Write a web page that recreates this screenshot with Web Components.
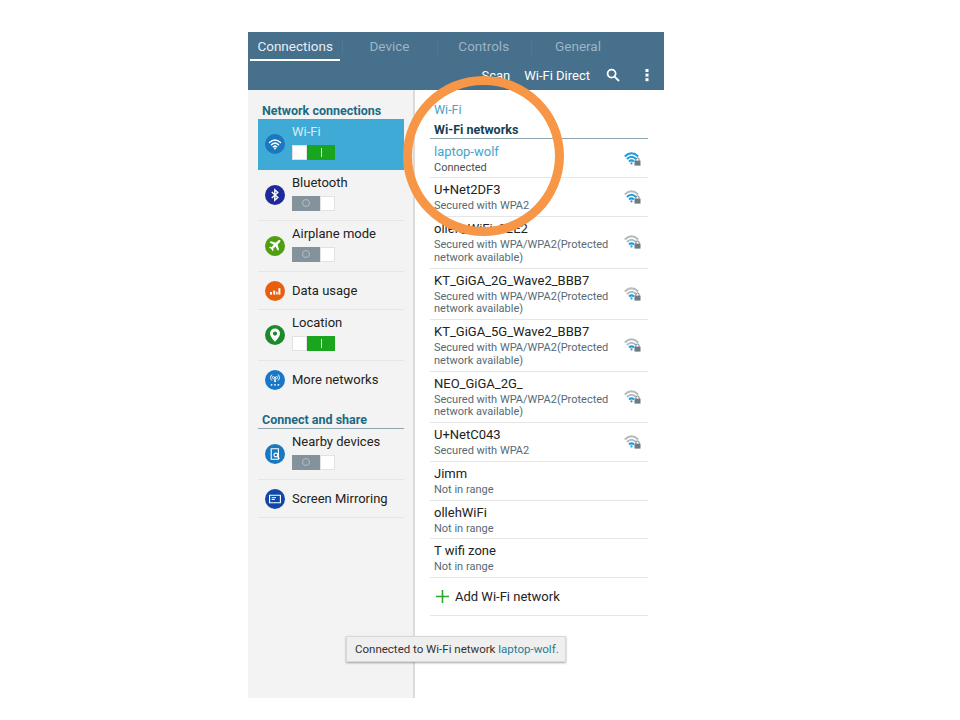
<!DOCTYPE html>
<html>
<head>
<meta charset="utf-8">
<title>Connections</title>
<style>
html, body { margin: 0; padding: 0; background: #fff; font-family: Roboto, "Liberation Sans", sans-serif; }
</style>
</head>
<body>
<x-settings-app>
    <x-tab-bar slot="header"></x-tab-bar>

    <x-section-title slot="side">Network connections</x-section-title>
    <x-side-item slot="side" icon="wifi" color="#1878c0" toggle="on" active>Wi-Fi</x-side-item>
    <x-side-item slot="side" icon="bluetooth" color="#1f2a9a" toggle="off">Bluetooth</x-side-item>
    <x-side-item slot="side" icon="plane" color="#4f9f10" toggle="off">Airplane mode</x-side-item>
    <x-side-item slot="side" icon="data" color="#e8600f">Data usage</x-side-item>
    <x-side-item slot="side" icon="pin" color="#1a8a2a" toggle="on">Location</x-side-item>
    <x-side-item slot="side" icon="antenna" color="#1878c8" plain>More networks</x-side-item>
    <x-section-title slot="side" ruled>Connect and share</x-section-title>
    <x-side-item slot="side" icon="nearby" color="#1878c0" toggle="off">Nearby devices</x-side-item>
    <x-side-item slot="side" icon="mirror" color="#1048a8">Screen Mirroring</x-side-item>

    <x-network-list slot="main">
        <x-network name="laptop-wolf" detail="Connected" level="3" connected></x-network>
        <x-network name="U+Net2DF3" detail="Secured with WPA2" level="2"></x-network>
        <x-network name="olleh_WiFi_02E2" detail="Secured with WPA/WPA2(Protected network available)" level="1"></x-network>
        <x-network name="KT_GiGA_2G_Wave2_BBB7" detail="Secured with WPA/WPA2(Protected network available)" level="1"></x-network>
        <x-network name="KT_GiGA_5G_Wave2_BBB7" detail="Secured with WPA/WPA2(Protected network available)" level="1"></x-network>
        <x-network name="NEO_GiGA_2G_" detail="Secured with WPA/WPA2(Protected network available)" level="1"></x-network>
        <x-network name="U+NetC043" detail="Secured with WPA2" level="1"></x-network>
        <x-network name="Jimm" detail="Not in range"></x-network>
        <x-network name="ollehWiFi" detail="Not in range"></x-network>
        <x-network name="T wifi zone" detail="Not in range"></x-network>
        <x-add-network></x-add-network>
    </x-network-list>

    <x-toast slot="overlay">Connected to Wi-Fi network <b>laptop-wolf.</b></x-toast>
    <x-focus-ring slot="overlay"></x-focus-ring>
</x-settings-app>

<script>
const SIDE_ICONS = {
    wifi: `<g fill="none" stroke="#fff" stroke-width="1.5" stroke-linecap="round"><path d="M4.5 8.5Q10 3.6 15.5 8.5"/><path d="M6.4 10.7Q10 7.5 13.6 10.7"/><path d="M8.3 12.8Q10 11.4 11.7 12.8"/></g><circle cx="10" cy="14.6" r="1" fill="#fff"/>`,
    bluetooth: `<path d="M6.8 7l6 5.6-3 2.6V4.8l3 2.6-6 5.6" fill="none" stroke="#fff" stroke-width="1.4"/>`,
    plane: `<path d="M15.6 4.4c-.7-.7-1.8-.6-2.5.1l-2.2 2.2-5.2-1.4-1.1 1.1 4.2 2.4-2.2 2.3-1.6-.3-.9.9 2.3 1.2 1.2 2.3.9-.9-.3-1.6 2.3-2.2 2.4 4.2 1.1-1.1-1.4-5.2 2.2-2.2c.7-.7.8-1.8.3-1.9z" fill="#fff"/>`,
    data: `<g fill="#fff"><rect x="5" y="11" width="2" height="2.6"/><rect x="8.2" y="9.6" width="2" height="4"/><rect x="11.2" y="10.8" width="1.4" height="2.8"/><rect x="13.4" y="7.2" width="2" height="6.4"/></g>`,
    pin: `<path fill-rule="evenodd" d="M10 3.6a5 5 0 0 0-5 5c0 3.4 5 8.2 5 8.2s5-4.8 5-8.2a5 5 0 0 0-5-5zm0 2.9a2.1 2.1 0 1 1 0 4.2 2.1 2.1 0 0 1 0-4.2z" fill="#fff"/>`,
    antenna: `<g fill="none" stroke="#fff" stroke-width="1"><path d="M7 4.6a4 4 0 0 0 0 6"/><path d="M13 4.6a4 4 0 0 1 0 6"/><path d="M8.4 6a2.2 2.2 0 0 0 0 3.2"/><path d="M11.6 6a2.2 2.2 0 0 1 0 3.2"/></g><circle cx="10" cy="7.6" r="1" fill="#fff"/><path d="M9.5 8h1l.5 4H9z" fill="#fff"/><g fill="#fff"><circle cx="6.6" cy="14.8" r=".9"/><circle cx="10" cy="14.8" r=".9"/><circle cx="13.4" cy="14.8" r=".9"/></g>`,
    nearby: `<path d="M6.2 4.7h7.2v10.6H6.2z" fill="none" stroke="#fff" stroke-width="1.1"/><circle cx="10.8" cy="11" r="1.9" fill="#1878c0" stroke="#fff" stroke-width="1.1"/><path d="M12.2 12.4l2.3 2.3" stroke="#fff" stroke-width="1.2"/>`,
    mirror: `<path d="M4.6 6.2h10.8v7.6H4.6z" fill="none" stroke="#fff" stroke-width="1.1"/><g fill="#fff"><rect x="6.6" y="8.2" width="4.4" height="1"/><rect x="6.6" y="10" width="3.2" height="1"/></g>`,
};

class SettingsApp extends HTMLElement {
    constructor() {
        super();
        this.attachShadow({mode: 'open'});
    }

    connectedCallback() {
        this.shadowRoot.innerHTML = `
            <style>
            :host {
                display: block;
                position: relative;
                width: 416px;
                height: 666px;
                margin: 32px 0 0 248px;
            }
            .body {
                display: flex;
                height: 608px;
            }
            .side {
                box-sizing: border-box;
                width: 167px;
                padding: 12px 9px 0 10px;
                background: #f3f3f3;
                border-right: 2px solid #dcdcdc;
            }
            .main {
                flex: 1;
                padding: 11px 16px 0 15px;
                background: #fff;
            }
            </style>
            <slot name="header"></slot>
            <div class="body">
                <div class="side"><slot name="side"></slot></div>
                <div class="main"><slot name="main"></slot></div>
            </div>
            <slot name="overlay"></slot>
        `;
    }
}

class TabBar extends HTMLElement {
    constructor() {
        super();
        this.attachShadow({mode: 'open'});
    }

    connectedCallback() {
        this.shadowRoot.innerHTML = `
            <style>
            :host {
                display: block;
                height: 58px;
                background: #46708c;
                color: #fff;
                font-size: 13.5px;
            }
            .tabs {
                display: grid;
                grid-template-columns: repeat(4, 94.3px);
                height: 27px;
            }
            .tab {
                position: relative;
                text-align: center;
                line-height: 29px;
                color: #9db5c4;
            }
            .tab + .tab::before {
                content: '';
                position: absolute;
                left: 0;
                top: 7px;
                height: 15px;
                width: 1px;
                background: #4e7893;
            }
            .tab.active {
                color: #e8eef2;
            }
            .tab.active::after {
                content: '';
                position: absolute;
                left: 2px;
                right: 2px;
                bottom: 0;
                height: 2px;
                background: #fff;
            }
            .actions {
                display: flex;
                justify-content: flex-end;
                align-items: center;
                box-sizing: border-box;
                height: 31px;
                padding: 1px 15px 0 0;
                font-size: 13px;
            }
            .scan { margin-right: 14px; }
            .direct { margin-right: 16px; }
            .search { margin-right: 25px; }
            svg { display: block; }
            </style>
            <div class="tabs">
                <div class="tab active">Connections</div>
                <div class="tab">Device</div>
                <div class="tab">Controls</div>
                <div class="tab">General</div>
            </div>
            <div class="actions">
                <span class="scan">Scan</span>
                <span class="direct">Wi-Fi Direct</span>
                <svg class="search" width="14" height="14" viewBox="0 0 14 14" fill="none" stroke="#fff" stroke-width="1.8">
                    <circle cx="5.6" cy="5.6" r="4"/><path d="M8.6 8.6l4.4 4.4"/>
                </svg>
                <svg width="4" height="14" viewBox="0 0 4 14" fill="#fff">
                    <rect x=".5" y="1" width="3" height="3"/><rect x=".5" y="5.6" width="3" height="3"/><rect x=".5" y="10.2" width="3" height="3"/>
                </svg>
            </div>
        `;
    }
}

class SectionTitle extends HTMLElement {
    constructor() {
        super();
        this.attachShadow({mode: 'open'});
    }

    connectedCallback() {
        const ruled = this.hasAttribute('ruled');
        this.shadowRoot.innerHTML = `
            <style>
            :host {
                display: block;
                box-sizing: border-box;
                padding-left: 4px;
                height: ${ruled ? 30 : 17}px;
                ${ruled ? 'padding-top: 12px; border-bottom: 1px solid #8fa6b0;' : ''}
                font-size: 12.5px;
                font-weight: 700;
                line-height: 18px;
                color: #1c6a84;
            }
            </style>
            <slot></slot>
        `;
    }
}

class SideItem extends HTMLElement {
    constructor() {
        super();
        this.attachShadow({mode: 'open'});
    }

    connectedCallback() {
        const icon = this.getAttribute('icon');
        const color = this.getAttribute('color');
        const toggle = this.getAttribute('toggle');
        const active = this.hasAttribute('active');
        const plain = this.hasAttribute('plain');
        this.shadowRoot.innerHTML = `
            <style>
            :host {
                display: flex;
                align-items: center;
                box-sizing: border-box;
                height: ${toggle ? 51 : 38}px;
                padding-left: 7px;
                gap: 7px;
                font-size: 13px;
                line-height: 18px;
                color: ${active ? '#d4edf7' : '#222'};
                background: ${active ? '#40aad6' : 'none'};
                border-bottom: ${plain ? 'none' : `1px solid ${active ? '#40aad6' : '#e6e6e6'}`};
            }
            svg { display: block; flex: none; }
            .text { display: flex; flex-direction: column; align-items: flex-start; gap: 4px; margin-top: ${toggle ? -6 : 0}px; }
            </style>
            <svg width="20" height="20" viewBox="0 0 20 20">
                <circle cx="10" cy="10" r="10" fill="${color}"/>
                ${SIDE_ICONS[icon]}
            </svg>
            <div class="text">
                <slot></slot>
                ${toggle ? `<x-toggle state="${toggle}"></x-toggle>` : ''}
            </div>
        `;
    }
}

class Toggle extends HTMLElement {
    constructor() {
        super();
        this.attachShadow({mode: 'open'});
    }

    connectedCallback() {
        const on = this.getAttribute('state') === 'on';
        this.shadowRoot.innerHTML = `
            <style>
            :host {
                display: flex;
                width: 43px;
                height: 15px;
            }
            .blank {
                width: 15px;
                background: #fff;
                box-shadow: inset 0 0 0 1px #e2e2e2;
            }
            .on, .off {
                width: 28px;
                display: flex;
                align-items: center;
                justify-content: center;
            }
            .on { background: #1aa51e; }
            .on i { width: 1px; height: 9px; background: #d8f0c8; }
            .off { background: #84929c; }
            .off i { box-sizing: border-box; width: 8px; height: 8px; border: 1px solid #b4bec5; border-radius: 50%; }
            </style>
            ${on
                ? '<div class="blank"></div><div class="on"><i></i></div>'
                : '<div class="off"><i></i></div><div class="blank"></div>'}
        `;
    }
}

class NetworkList extends HTMLElement {
    constructor() {
        super();
        this.attachShadow({mode: 'open'});
    }

    connectedCallback() {
        this.shadowRoot.innerHTML = `
            <style>
            :host { display: block; }
            .current {
                padding-left: 4px;
                font-size: 12.5px;
                line-height: 18px;
                color: #46a2c8;
            }
            .heading {
                box-sizing: border-box;
                height: 18px;
                margin-top: 2px;
                padding-left: 4px;
                font-size: 12.5px;
                font-weight: 700;
                line-height: 18px;
                color: #143f55;
                border-bottom: 1px solid #8fa6b0;
            }
            </style>
            <div class="current">Wi-Fi</div>
            <div class="heading">Wi-Fi networks</div>
            <slot></slot>
        `;
    }
}

class Network extends HTMLElement {
    constructor() {
        super();
        this.attachShadow({mode: 'open'});
    }

    connectedCallback() {
        const connected = this.hasAttribute('connected');
        const level = this.getAttribute('level');
        this.shadowRoot.innerHTML = `
            <style>
            :host {
                display: flex;
                align-items: center;
                box-sizing: border-box;
                padding: ${connected ? '4px 7px 2.5px 4px' : '3px 7px 3px 4px'};
                border-bottom: 1px solid #e6e6e6;
            }
            .text { flex: 1; min-width: 0; }
            .name {
                font-size: 13px;
                line-height: 18px;
                color: ${connected ? '#3fa6cc' : '#222'};
            }
            .detail {
                width: 186px;
                margin-top: 1px;
                font-size: 11px;
                line-height: 12.75px;
                color: ${connected ? '#4a4f52' : '#566a76'};
            }
            </style>
            <div class="text">
                <div class="name">${this.getAttribute('name')}</div>
                <div class="detail">${this.getAttribute('detail')}</div>
            </div>
            ${level ? `<x-wifi-signal level="${level}"></x-wifi-signal>` : ''}
        `;
    }
}

class WifiSignal extends HTMLElement {
    constructor() {
        super();
        this.attachShadow({mode: 'open'});
    }

    connectedCallback() {
        const level = Number(this.getAttribute('level'));
        const tone = (n) => (level >= n ? '#1c9cdc' : '#b4bcc0');
        this.shadowRoot.innerHTML = `
            <style>
            :host { display: block; flex: none; margin-top: -1px; }
            svg { display: block; }
            </style>
            <svg width="17" height="15" viewBox="0 0 17 15" fill="none" stroke-width="2">
                <path d="M.8 5.4Q7.5-.8 14.2 5.4" stroke="${tone(3)}"/>
                <path d="M2.9 8Q7.5 3.6 12.1 8" stroke="${tone(2)}"/>
                <path d="M5 10.4Q7.5 8.3 10 10.4" stroke="${tone(1)}"/>
                <circle cx="7.5" cy="12.4" r="1.1" fill="${tone(1)}"/>
                <rect x="10.5" y="9.6" width="6" height="5" fill="#6c7a82"/>
                <path d="M11.9 9.8V8.6a1.6 1.6 0 0 1 3.2 0v1.2" stroke="#6c7a82" stroke-width="1"/>
            </svg>
        `;
    }
}

class AddNetwork extends HTMLElement {
    constructor() {
        super();
        this.attachShadow({mode: 'open'});
    }

    connectedCallback() {
        this.shadowRoot.innerHTML = `
            <style>
            :host {
                display: flex;
                align-items: center;
                box-sizing: border-box;
                height: 38px;
                padding-left: 6px;
                gap: 6px;
                font-size: 13px;
                color: #222;
                border-bottom: 1px solid #e6e6e6;
            }
            svg { display: block; }
            </style>
            <svg width="13" height="13" viewBox="0 0 13 13" fill="none" stroke="#2aa52e" stroke-width="1.6">
                <path d="M6.5 0v13M0 6.5h13"/>
            </svg>
            <span>Add Wi-Fi network</span>
        `;
    }
}

class Toast extends HTMLElement {
    constructor() {
        super();
        this.attachShadow({mode: 'open'});
    }

    connectedCallback() {
        this.shadowRoot.innerHTML = `
            <style>
            :host {
                position: absolute;
                left: 98px;
                top: 604px;
                box-sizing: border-box;
                width: 220px;
                height: 26px;
                padding-left: 8px;
                background: #efefef;
                border: 1px solid #d8d8d8;
                box-shadow: 0 1px 2px rgba(0, 0, 0, .35);
                font-size: 11.5px;
                line-height: 24px;
                color: #333;
                white-space: nowrap;
            }
            ::slotted(b) {
                font-weight: 400;
                color: #2a7a96;
            }
            </style>
            <slot></slot>
        `;
    }
}

class FocusRing extends HTMLElement {
    constructor() {
        super();
        this.attachShadow({mode: 'open'});
    }

    connectedCallback() {
        this.shadowRoot.innerHTML = `
            <style>
            :host {
                position: absolute;
                left: 155px;
                top: 44px;
                box-sizing: border-box;
                width: 161px;
                height: 160px;
                border: 9px solid #f79646;
                border-radius: 50%;
                pointer-events: none;
            }
            </style>
        `;
    }
}

customElements.define('x-settings-app', SettingsApp);
customElements.define('x-tab-bar', TabBar);
customElements.define('x-section-title', SectionTitle);
customElements.define('x-side-item', SideItem);
customElements.define('x-toggle', Toggle);
customElements.define('x-network-list', NetworkList);
customElements.define('x-network', Network);
customElements.define('x-wifi-signal', WifiSignal);
customElements.define('x-add-network', AddNetwork);
customElements.define('x-toast', Toast);
customElements.define('x-focus-ring', FocusRing);
</script>
</body>
</html>
